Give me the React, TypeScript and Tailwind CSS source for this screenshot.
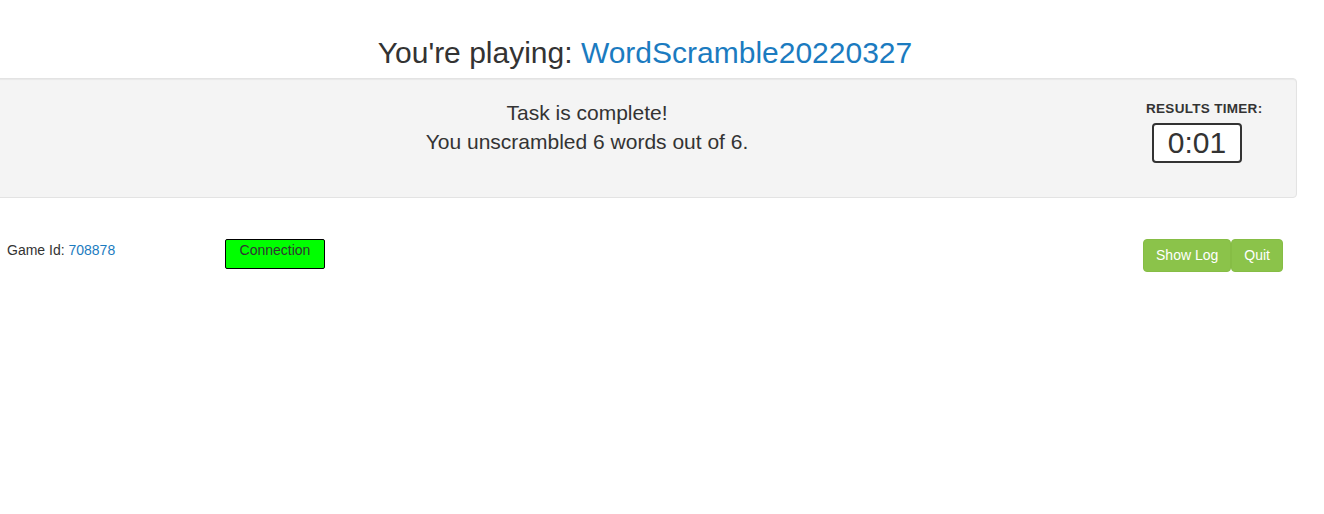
import React from "react";

export default function App() {
  return (
    <div
      className="w-[1324px] h-[514px] bg-white text-[#333333] overflow-hidden"
      style={{ fontFamily: '"Liberation Sans", Arial, sans-serif' }}
    >
      <div className="ml-[-7px] w-[1304px]">
        <h2 className="pt-[36px] text-[30px] leading-[33px] text-center font-normal">
          You're playing: <span className="text-[#1b7bc0]">WordScramble20220327</span>
        </h2>
        <div className="mt-[9px] h-[120px] bg-[#f4f4f4] border border-[#e3e3e3] rounded-[4px] shadow-[inset_0_1px_1px_rgba(0,0,0,0.05)] flex px-[34px]">
          <div className="flex-1 text-center text-[21px] leading-[29px] pt-[19px]">
            <div>Task is complete!</div>
            <div>You unscrambled 6 words out of 6.</div>
          </div>
          <div className="w-[116px] pt-[22px]">
            <div className="text-[13.5px] font-bold leading-[16px] tracking-[0.3px] whitespace-nowrap">RESULTS TIMER:</div>
            <div className="ml-[6px] mt-[6px] w-[90px] h-[40px] border-2 border-[#333333] rounded-[4px] bg-white flex items-center justify-center text-[30px] leading-none">
              0:01
            </div>
          </div>
        </div>
        <div className="mt-[41px] flex items-start pl-[14px] pr-[14px]">
          <div className="w-[218px] pt-[2px] text-[14px] leading-[18px]">
            Game Id: <span className="text-[#1b7bc0]">708878</span>
          </div>
          <div className="w-[100px] h-[30px] bg-[#00ff00] border border-black rounded-[2px] text-[14px] leading-[20px] text-center text-[#333333]">
            Connection
          </div>
          <div className="ml-auto flex">
            <button className="h-[33px] px-[12px] bg-[#8bc34a] text-white text-[14px] rounded-[4px] border border-[#86bd45]">
              Show Log
            </button>
            <button className="h-[33px] px-[12px] bg-[#8bc34a] text-white text-[14px] rounded-[4px] border border-[#86bd45]">
              Quit
            </button>
          </div>
        </div>
      </div>
    </div>
  );
}
